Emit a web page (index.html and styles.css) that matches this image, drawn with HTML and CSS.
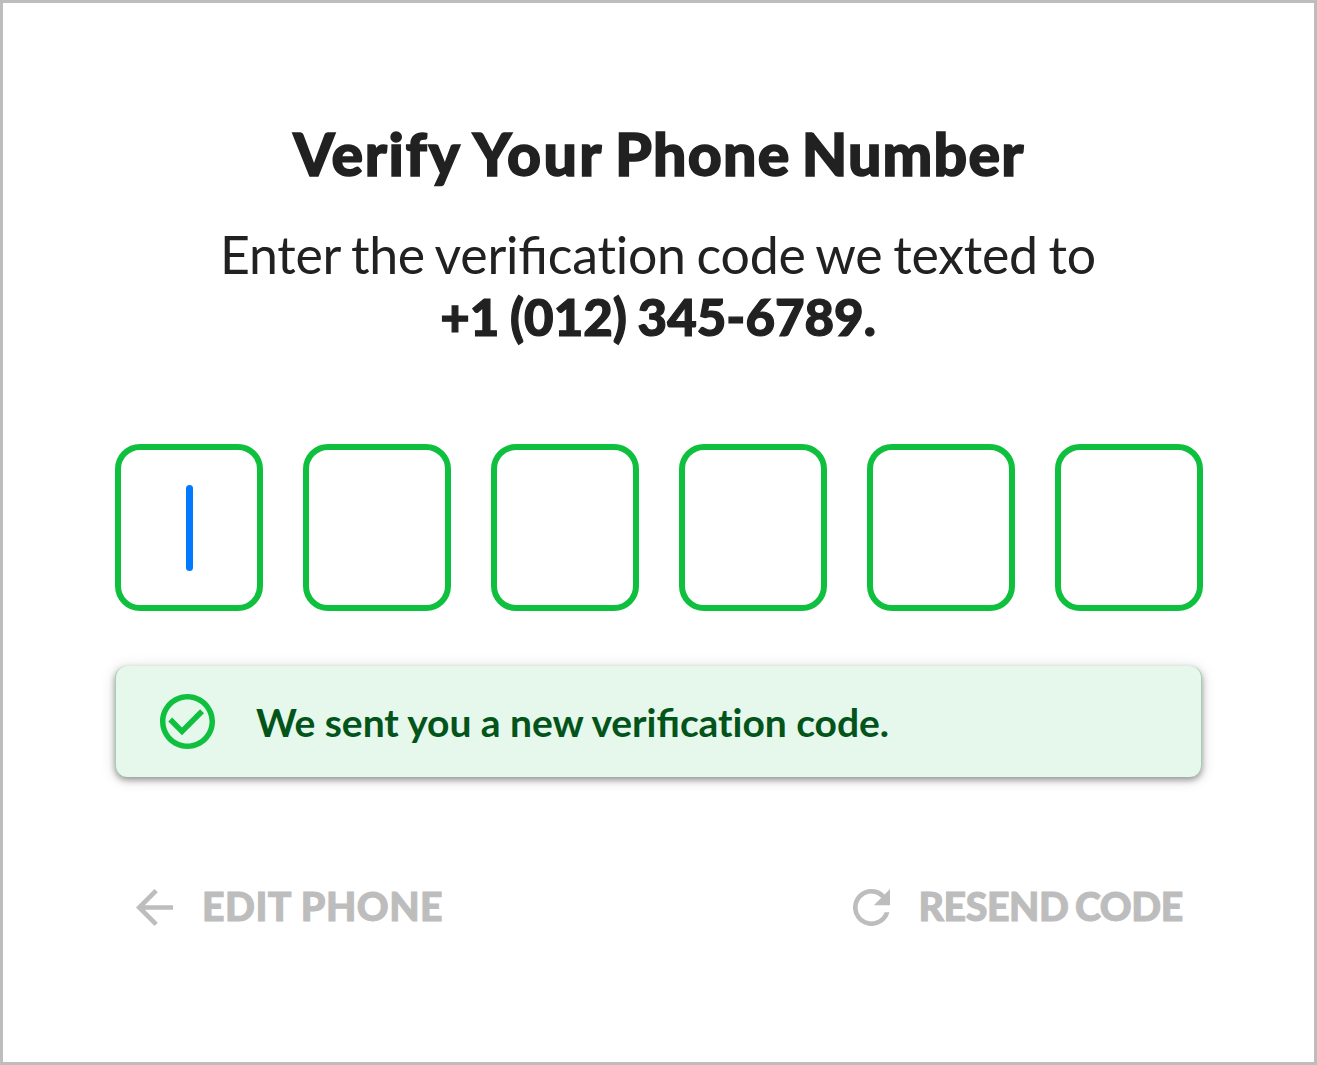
FILE: index.html
```html
<!DOCTYPE html>
<html lang="en">
<head>
<meta charset="utf-8">
<title>Verify Your Phone Number</title>
<link rel="stylesheet" href="styles.css">
</head>
<body>
<main class="card">
  <h1 class="title"><span class="wide">Verify</span> <span class="wider">Your</span> Phone Number</h1>
  <p class="lead">Enter the veri<span class="joined">fi</span>cation code we texted to</p>
  <p class="phone">+1 (012) 345-6789.</p>
  <div class="code">
    <div class="digit"><span class="caret"></span></div>
    <div class="digit"></div>
    <div class="digit"></div>
    <div class="digit"></div>
    <div class="digit"></div>
    <div class="digit"></div>
  </div>
  <div class="notice">
    <svg class="check" viewBox="2 2 20 20"><path d="M16.59 7.58L10 14.17l-3.59-3.58L5 12l5 5 8-8zM12 2C6.48 2 2 6.48 2 12s4.48 10 10 10 10-4.48 10-10S17.52 2 12 2zm0 18c-4.42 0-8-3.58-8-8s3.58-8 8-8 8 3.58 8 8-3.58 8-8 8z"/></svg>
    <span class="message">We sent you a new veri<span class="joined">fi</span>cation code.</span>
  </div>
  <div class="actions">
    <a class="action"><svg class="icon" viewBox="4 4 16 16"><path d="M20 11H7.83l5.59-5.59L12 4l-8 8 8 8 1.41-1.41L7.83 13H20v-2z"/></svg><span class="edit">EDIT PHONE</span></a>
    <a class="action"><svg class="icon" viewBox="4 4 16 16"><path d="M17.65 6.35A7.96 7.96 0 0 0 12 4a8 8 0 1 0 7.73 10h-2.08A6 6 0 1 1 12 6c1.66 0 3.14.69 4.22 1.78L13 11h7V4z"/></svg><span class="resend">RESEND CODE</span></a>
  </div>
</main>
</body>
</html>
```
FILE: styles.css
```css
* { box-sizing: border-box; }
body { margin: 0; background: #fff; color: #212121; font-family: Lato, sans-serif; }
.card { width: 1317px; height: 1065px; border: 3px solid #bdbdbd; padding: 113px 111px 0 112px; overflow: hidden; }
.title, .lead, .phone { margin: 0; text-align: center; white-space: nowrap; }
.title { font-size: 59px; line-height: 76px; font-weight: 900; letter-spacing: 1.2px; word-spacing: -4px; -webkit-text-stroke: 1.5px currentColor; }
.wide { letter-spacing: 1.6px; }
.wider { letter-spacing: 2.3px; }
.lead { margin-top: 31px; padding-right: 2px; font-size: 51.8px; line-height: 62px; letter-spacing: -.25px; word-spacing: -2.2px; }
.joined { letter-spacing: 0; }
.phone { margin-top: 1px; padding-right: 2px; font-size: 51px; line-height: 62px; font-weight: 900; word-spacing: -1.5px; -webkit-text-stroke: 1.2px currentColor; }
.code { display: flex; justify-content: space-between; margin-top: 96px; }
.digit { display: flex; align-items: center; justify-content: center; width: 148px; height: 167px; border: 6px solid #0fbf3e; border-radius: 25px; }
.caret { width: 7px; height: 86px; border-radius: 3.5px; background: #007aff; }
.notice { display: flex; align-items: center; width: 1087px; height: 111px; margin-top: 55px; padding-left: 44px; border: solid #a5cfb0; border-width: 0 1px; border-radius: 12px; background: #e6f7eb; box-shadow: 0 3px 6px rgba(0,0,0,.36), 0 2px 16px rgba(0,0,0,.14); }
.check { width: 55px; height: 55px; fill: #0fbf3e; }
.message { margin-left: 41px; font-size: 39px; font-weight: 700; letter-spacing: -.05px; color: #03541a; white-space: nowrap; }
.actions { display: flex; justify-content: space-between; margin-top: 101px; padding: 0 20px 0 21px; color: #bdbdbd; }
.action { display: flex; align-items: center; height: 58px; font-size: 39.3px; font-weight: 900; white-space: nowrap; }
.icon { width: 37px; height: 37px; margin-right: 29px; fill: currentColor; }
.action:last-child .icon { margin-right: 28px; }
.edit, .resend { padding-bottom: 4px; -webkit-text-stroke: 1px currentColor; }
.edit { letter-spacing: .5px; }
.resend { letter-spacing: -.4px; word-spacing: -2.5px; }
```
